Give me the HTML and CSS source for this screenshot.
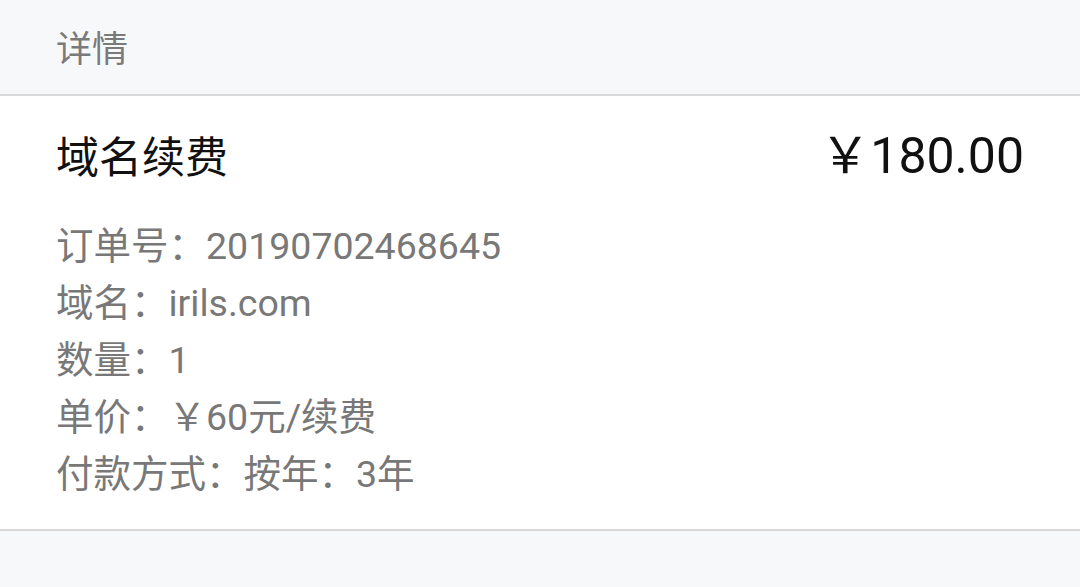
FILE: index.html
```html
<!DOCTYPE html>
<html>

	<head lang="zh">
		<meta charset="UTF-8">
		<meta name="viewport" content="width=device-width, user-scalable=no, initial-scale=1.0" />
		<title>详情</title>
		<link rel="stylesheet" href="styles.css">
	</head>

	<body>
		<!-- 顶部标题 -->
		<div class="section-head">详情</div>

		<!-- 订单卡片 -->
		<div class="order-card">
			<div class="order-top">
				<span class="order-name">域名续费</span>
				<span class="order-price">￥180.00</span>
			</div>
			<ul class="order-info">
				<li>订单号：20190702468645</li>
				<li>域名：irils.com</li>
				<li>数量：1</li>
				<li>单价：￥60元/续费</li>
				<li>付款方式：按年：3年</li>
			</ul>
		</div>
	</body>

</html>
```

FILE: styles.css
```css
* {
	margin: 0;
	padding: 0;
}

body {
	background-color: #f7f8fa;
	font-family: Roboto, "Noto Sans CJK SC", sans-serif;
}

/* 顶部标题 */
.section-head {
	height: 94px;
	padding: 0 56px;
	line-height: 100px;
	font-size: 36px;
	color: #7a7a7a;
	border-bottom: 2px solid #d9d9d9;
}

/* 订单卡片 */
.order-card {
	background-color: #ffffff;
	padding: 28px 56px 26px 56px;
	border-bottom: 2px solid #d9d9d9;
}

.order-top {
	display: flex;
	justify-content: space-between;
	align-items: center;
	height: 60px;
	margin-bottom: 34px;
}

.order-name {
	font-size: 43px;
	color: #111111;
}

.order-price {
	margin-bottom: 6px;
	font-size: 50px;
	color: #111111;
}

.order-info {
	list-style: none;
}

.order-info li {
	font-size: 37.5px;
	line-height: 57px;
	color: #787878;
}
```
